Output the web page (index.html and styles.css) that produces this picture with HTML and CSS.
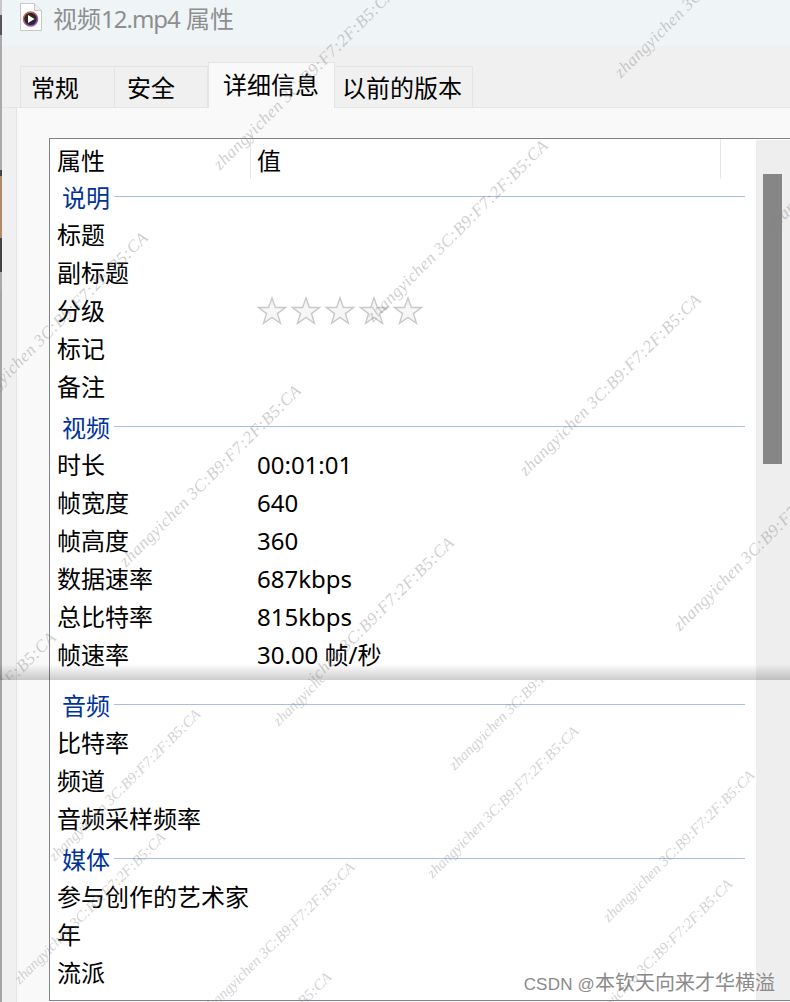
FILE: index.html
```html
<!DOCTYPE html>
<html lang="zh-CN">
<head>
    <meta charset="UTF-8">
    <title>视频12.mp4 属性</title>
    <link rel="stylesheet" href="styles.css">
</head>
<body>

    <!-- Edge of the window behind -->
    <div class="edge"></div>

    <!-- Title bar -->
    <div class="titlebar">
        <svg class="file-icon" width="22" height="28" viewBox="0 0 22 28">
            <defs>
                <linearGradient id="rim" x1="0" y1="0" x2="0.6" y2="1">
                    <stop offset="0" stop-color="#e8702a"/>
                    <stop offset="1" stop-color="#9a48c8"/>
                </linearGradient>
            </defs>
            <path d="M0.500 0.500h14l7 7v20h-21z" fill="#fff" stroke="#c6c6c6"/>
            <path d="M14.500 0.500v7h7" fill="#eee" stroke="#c6c6c6"/>
            <circle cx="10.500" cy="16" r="7" fill="#2a2a2c" stroke="url(#rim)" stroke-width="1.500"/>
            <path d="M8 12l6.500 4-6.500 4z" fill="#fff"/>
        </svg>
        <span class="title">视频<span class="title-name">12.mp4</span> 属性</span>
    </div>

    <!-- Tabs -->
    <div class="tabs">
        <div class="tab tab-first">常规</div>
        <div class="tab tab-second">安全</div>
        <div class="tab active">详细信息</div>
        <div class="tab tab-last">以前的版本</div>
    </div>

    <!-- Tab page -->
    <div class="page">
        <div class="listbox">
            <div class="list">
                <div class="head">
                    <div class="head-name">属性</div>
                    <div class="head-value">值</div>
                </div>

                <div class="group"><span>说明</span></div>
                <div class="row"><span class="name">标题</span></div>
                <div class="row"><span class="name">副标题</span></div>
                <div class="row">
                    <span class="name">分级</span>
                    <span class="stars">
                        <svg width="32" height="30" viewBox="-1 -1 34 32"><path class="star" d="M16 2l3.600 10.300h10.900l-8.700 6.500 3.200 10.400-9-6.300-9 6.300 3.200-10.400-8.700-6.500h10.900z"/></svg>
                        <svg width="32" height="30" viewBox="-1 -1 34 32"><path class="star" d="M16 2l3.600 10.300h10.900l-8.700 6.500 3.200 10.400-9-6.300-9 6.300 3.200-10.400-8.700-6.500h10.900z"/></svg>
                        <svg width="32" height="30" viewBox="-1 -1 34 32"><path class="star" d="M16 2l3.600 10.300h10.900l-8.700 6.500 3.200 10.400-9-6.300-9 6.300 3.200-10.400-8.700-6.500h10.900z"/></svg>
                        <svg width="32" height="30" viewBox="-1 -1 34 32"><path class="star" d="M16 2l3.600 10.300h10.900l-8.700 6.500 3.200 10.400-9-6.300-9 6.300 3.200-10.400-8.700-6.500h10.900z"/></svg>
                        <svg width="32" height="30" viewBox="-1 -1 34 32"><path class="star" d="M16 2l3.600 10.300h10.900l-8.700 6.500 3.200 10.400-9-6.300-9 6.300 3.200-10.400-8.700-6.500h10.900z"/></svg>
                    </span>
                </div>
                <div class="row"><span class="name">标记</span></div>
                <div class="row"><span class="name">备注</span></div>

                <div class="group group-video"><span>视频</span></div>
                <div class="row"><span class="name">时长</span><span class="value">00:01:01</span></div>
                <div class="row"><span class="name">帧宽度</span><span class="value">640</span></div>
                <div class="row"><span class="name">帧高度</span><span class="value">360</span></div>
                <div class="row"><span class="name">数据速率</span><span class="value">687kbps</span></div>
                <div class="row"><span class="name">总比特率</span><span class="value">815kbps</span></div>
                <div class="row"><span class="name">帧速率</span><span class="value">30.00 帧/秒</span></div>

                <div class="group group-audio"><span>音频</span></div>
                <div class="row"><span class="name">比特率</span></div>
                <div class="row"><span class="name">频道</span></div>
                <div class="row"><span class="name">音频采样频率</span></div>

                <div class="group group-media"><span>媒体</span></div>
                <div class="row"><span class="name">参与创作的艺术家</span></div>
                <div class="row"><span class="name">年</span></div>
                <div class="row"><span class="name">流派</span></div>
            </div>
            <div class="scrollbar"><div class="thumb"></div></div>
        </div>
    </div>

    <!-- Stitched screenshot seam -->
    <div class="seam"></div>

    <!-- Watermarks, upper shot -->
    <div class="marks marks-upper">
        <span class="mark u1">zhangyichen 3C:B9:F7:2F:B5:CA</span>
        <span class="mark u2">zhangyichen 3C:B9:F7:2F:B5:CA</span>
        <span class="mark u3">zhangyichen 3C:B9:F7:2F:B5:CA</span>
        <span class="mark u4">zhangyichen 3C:B9:F7:2F:B5:CA</span>
        <span class="mark u5">zhangyichen 3C:B9:F7:2F:B5:CA</span>
        <span class="mark u6">zhangyichen 3C:B9:F7:2F:B5:CA</span>
        <span class="mark u7">zhangyichen 3C:B9:F7:2F:B5:CA</span>
        <span class="mark u8">zhangyichen 3C:B9:F7:2F:B5:CA</span>
        <span class="mark u9">zhangyichen 3C:B9:F7:2F:B5:CA</span>
        <span class="mark u10">zhangyichen 3C:B9:F7:2F:B5:CA</span>
    </div>

    <!-- Watermarks, lower shot -->
    <div class="marks marks-lower">
        <span class="mark l1">zhangyichen 3C:B9:F7:2F:B5:CA</span>
        <span class="mark l2">zhangyichen 3C:B9:F7:2F:B5:CA</span>
        <span class="mark l3">zhangyichen 3C:B9:F7:2F:B5:CA</span>
        <span class="mark l4">zhangyichen 3C:B9:F7:2F:B5:CA</span>
        <span class="mark l5">zhangyichen 3C:B9:F7:2F:B5:CA</span>
        <span class="mark l6">zhangyichen 3C:B9:F7:2F:B5:CA</span>
        <span class="mark l7">zhangyichen 3C:B9:F7:2F:B5:CA</span>
        <span class="mark l8">zhangyichen 3C:B9:F7:2F:B5:CA</span>
        <span class="mark l9">zhangyichen 3C:B9:F7:2F:B5:CA</span>
    </div>

    <div class="csdn"><span class="csdn-latin">CSDN @</span>本钦天向来才华横溢</div>

</body>
</html>
```

FILE: styles.css
```css
/* Body and General Styling */
html, body {
    margin: 0;
    height: 100%;
}

body {
    width: 790px;
    height: 1002px;
    overflow: hidden;
    position: relative;
    background-color: #f0f0f0;
    color: #000;
    font-family: "Noto Sans", "Noto Sans CJK SC", sans-serif;
    font-size: 24px;
}

.edge {
    position: absolute;
    left: 0;
    top: 0;
    width: 2px;
    height: 100%;
    background: linear-gradient(#c8c8c8 0 15px, #555 15px 35px, #aaa 35px 170px, #444 170px 176px,
        #b08a68 176px 238px, #444 238px 272px, #aaa 272px 292px, #a4a4a4 292px);
}

/* Title bar */
.titlebar {
    height: 46px;
    box-sizing: border-box;
    padding: 3px 0 0 20px;
    display: flex;
    align-items: flex-start;
    gap: 11px;
    background-color: #eff4f7;
}

.title {
    color: #8e8e8e;
    line-height: 32px;
}

.title-name {
    letter-spacing: -1px;
}

/* Tabs */
.tabs {
    height: 62px;
    box-sizing: border-box;
    padding: 16px 0 0 20px;
    display: flex;
    align-items: flex-end;
    border-bottom: 1px solid #e4e4e4;
}

.tab {
    height: 41px;
    box-sizing: border-box;
    border: 1px solid #e4e4e4;
    border-bottom: none;
    line-height: 42px;
    background-color: #f0f0f0;
}

.tab-first {
    width: 95px;
    padding-left: 10px;
}

.tab-second {
    width: 93px;
    padding-left: 12px;
    border-left: none;
}

.tab.active {
    height: 46px;
    width: 127px;
    margin-bottom: -1px;
    padding-left: 14px;
    line-height: 44px;
    background-color: #f9f9f9;
    position: relative;
}

.tab-last {
    width: 138px;
    padding-left: 7px;
    border-left: none;
}

/* Tab page */
.page {
    margin-left: 16px;
    height: 894px;
    box-sizing: border-box;
    padding: 30px 0 0 32px;
    background-color: #f9f9f9;
    border-left: 1px solid #e4e4e4;
}

.listbox {
    height: 863px;
    box-sizing: border-box;
    border: 1px solid #82828c;
    border-right: none;
    display: flex;
    background-color: #fff;
}

.list {
    width: 706px;
}

.scrollbar {
    flex: 1;
    margin-top: 1px;
    padding: 34px 8px 0 7px;
    background-color: #eeeeee;
}

.thumb {
    height: 290px;
    background-color: #868686;
}

/* List rows */
.head {
    display: flex;
    height: 40px;
    line-height: 44px;
}

.head-name {
    width: 201px;
    box-sizing: border-box;
    padding-left: 7px;
    border-right: 1px solid #e6e6e6;
}

.head-value {
    width: 470px;
    box-sizing: border-box;
    padding-left: 6px;
    border-right: 1px solid #e6e6e6;
}

.row {
    display: flex;
    height: 38px;
    line-height: 36px;
}

.name {
    width: 207px;
    flex-shrink: 0;
    box-sizing: border-box;
    padding-left: 7px;
    white-space: nowrap;
}

.stars {
    display: flex;
    margin-top: 2px;
    margin-left: -1px;
    gap: 2px;
}

.star {
    fill: #f6f6f6;
    stroke: #c9c9c9;
    stroke-width: 1.500;
}

.group {
    height: 38px;
    width: 683px;
    display: flex;
    align-items: center;
    padding-left: 12px;
    color: #003399;
    line-height: 38px;
}

.group span {
    padding-right: 4px;
}

.group::after {
    content: "";
    flex: 1;
    height: 1px;
    margin-bottom: 4px;
    background-color: #a9bfe2;
}

.group-video {
    margin-top: 2px;
}

.group-audio {
    margin-top: 12px;
}

.group-media {
    margin-top: 2px;
}

/* Stitched screenshot seam */
.seam {
    position: absolute;
    left: 0;
    top: 664px;
    width: 100%;
    height: 16px;
    background: linear-gradient(rgba(0, 0, 0, 0), rgba(0, 0, 0, 0.2));
}

/* Watermarks */
.marks {
    position: absolute;
    left: 0;
    width: 100%;
    overflow: hidden;
    pointer-events: none;
}

.marks-upper {
    top: 0;
    height: 680px;
}

.marks-lower {
    top: 680px;
    height: 322px;
}

.mark {
    position: absolute;
    white-space: nowrap;
    font-family: "Liberation Serif", serif;
    font-style: italic;
    transform: rotate(-45deg);
}

.marks-upper .mark {
    font-size: 17px;
    line-height: 22px;
    letter-spacing: 0.5px;
    color: rgba(130, 130, 130, 0.4);
}

.marks-lower .mark {
    font-size: 15px;
    line-height: 20px;
    color: rgba(140, 140, 140, 0.4);
}

.u1 { left: 180px; top: 68px; }
.u2 { left: 581px; top: -24px; }
.u3 { left: -67px; top: 312px; }
.u4 { left: 333px; top: 220px; }
.u5 { left: 86px; top: 465px; }
.u6 { left: 486px; top: 374px; }
.u7 { left: 733px; top: 129px; }
.u8 { left: -159px; top: 712px; }
.u9 { left: 239px; top: 617px; }
.u10 { left: 640px; top: 529px; }

.l1 { left: 245px; top: -40px; }
.l2 { left: 421px; top: 4px; }
.l3 { left: 21px; top: 95px; }
.l4 { left: -14px; top: 218px; }
.l5 { left: 175px; top: 248px; }
.l6 { left: 399px; top: 112px; }
.l7 { left: 575px; top: 156px; }
.l8 { left: 553px; top: 265px; }
.l9 { left: 152px; top: 358px; }

.csdn {
    position: absolute;
    right: 15px;
    top: 970px;
    color: #8a8a8a;
    font-size: 20px;
    line-height: 26px;
    font-family: "Liberation Sans", "Noto Sans CJK SC", sans-serif;
}

.csdn-latin {
    font-size: 17px;
    letter-spacing: 0.2px;
}
```
